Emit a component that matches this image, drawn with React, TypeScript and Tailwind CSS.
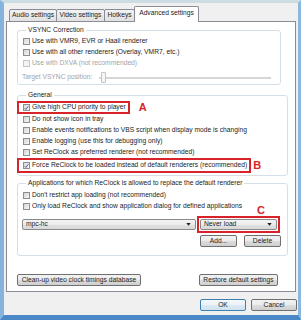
import type { ReactNode } from "react";

type CheckProps = {
  label: string;
  checked?: boolean;
  disabled?: boolean;
};

const Box = ({ checked, disabled }: { checked?: boolean; disabled?: boolean }) => (
  <span
    className={
      disabled
        ? "flex h-[7px] w-[7px] shrink-0 items-center justify-center border border-[#c6c6c6] bg-[#f4f4f4]"
        : "flex h-[7px] w-[7px] shrink-0 items-center justify-center border border-[#8e8f8f] bg-[linear-gradient(135deg,#d3d6da,#f6f6f6)]"
    }
  >
    {checked && (
      <svg viewBox="0 0 8 8" className="h-[6px] w-[6px]">
        <path d="M1 4.2 L3 6.3 L7 1.2" fill="none" stroke="#3d4f86" strokeWidth="1.4" />
      </svg>
    )}
  </span>
);

const Check = ({ label, checked, disabled }: CheckProps) => (
  <div className="flex h-[11px] items-center gap-[2px]">
    <Box checked={checked} disabled={disabled} />
    <span className={disabled ? "text-[#a3a3a3]" : "text-[#1c1c1c]"}>{label}</span>
  </div>
);

// red annotation frame round a row, drawn with outline so it takes no room
const Marked = ({ children, pr }: { children: ReactNode; pr: string }) => (
  <div
    className={`ml-[-5px] w-fit pl-[5px] ${pr} outline-2 outline-offset-[-1px] outline-[#d8232a]`}
  >
    {children}
  </div>
);

const Mark = ({ letter }: { letter: string }) => (
  <span className="text-[11px] font-bold leading-none text-[#d8232a]">{letter}</span>
);

const Btn = ({ label, className = "" }: { label: string; className?: string }) => (
  <button
    className={`flex h-[12px] items-center justify-center rounded-[2px] border border-[#707070] bg-[linear-gradient(#f2f2f2_0%,#ebebeb_50%,#dddddd_51%,#cfcfcf_100%)] text-[#1c1c1c] ${className}`}
  >
    {label}
  </button>
);

const Combo = ({ value, className = "" }: { value: string; className?: string }) => (
  <div
    className={`flex h-[11px] items-center justify-between rounded-[2px] border border-[#8a8a8a] bg-[linear-gradient(#f4f4f4_0%,#ececec_50%,#e1e1e1_51%,#d8d8d8_100%)] pl-[3px] pr-[4px] text-[#1c1c1c] ${className}`}
  >
    <span>{value}</span>
    <svg viewBox="0 0 6 4" className="h-[3px] w-[5px]">
      <path d="M0 0 H6 L3 3.5 Z" fill="#222" />
    </svg>
  </div>
);

const Tab = ({ label, active, w }: { label: string; active?: boolean; w: string }) => (
  <div
    className={
      active
        ? `flex h-[16px] ${w} items-start justify-center rounded-t-[2px] border border-b-0 border-[#898c95] bg-white pt-[3px] text-[#1c1c1c]`
        : `flex h-[13px] ${w} items-start justify-center rounded-t-[2px] border border-[#898c95] bg-[linear-gradient(#f2f2f2,#e1e1e1)] pt-[2px] text-[#1c1c1c]`
    }
  >
    {label}
  </div>
);

export default function App() {
  return (
    <div className="flex h-[320px] w-[301px] border-b-[5px] border-l-[4px] border-r-[3px] border-t-[3px] border-b-[#4a88c7] border-l-[#86b3dd] border-r-[#8db8de] border-t-[#cbdce3] font-['Liberation_Sans',Arial,sans-serif] text-[6.7px] leading-none">
      <div className="flex flex-1 flex-col bg-[#f0f0f0]">
        {/* tabs */}
        <div className="relative z-10 mb-[-1px] ml-[5px] mt-[3px] flex items-end">
          <Tab label="Audio settings" w="w-[48px]" />
          <div className="-ml-px" />
          <Tab label="Video settings" w="w-[49px]" />
          <div className="-ml-px" />
          <Tab label="Hotkeys" w="w-[31px]" />
          <div className="-ml-px" />
          <Tab label="Advanced settings" active w="w-[65px]" />
        </div>

        {/* tab page */}
        <div className="ml-[2px] flex h-[271px] w-[290px] flex-col border border-[#898c95] bg-white pl-[10px] pt-[4px]">
          <fieldset className="w-[264px] rounded-[3px] border border-[#d5dfe5] pb-[1px] pl-[5px]">
            <legend className="ml-[3px] px-[2px] leading-[8px] text-[#1c1c1c]">VSYNC Correction</legend>
            <div className="pt-[2px]">
              <Check label="Use with VMR9, EVR or Haali renderer" />
              <Check label="Use with all other renderers (Overlay, VMR7, etc.)" />
              <Check label="Use with DXVA (not recommended)" disabled />
              <div className="ml-[-1px] mt-[3px] flex h-[11px] items-center">
                <span className="w-[80px] text-[#a3a3a3]">Target VSYNC position:</span>
                <div className="relative ml-[-3px] h-[11px] flex-1">
                  <div className="mt-[5px] h-[2px] w-[172px] border border-[#d6d6d6] bg-[#f4f4f4]" />
                  <div className="absolute left-[2px] top-0 h-[11px] w-[5px] rounded-[1px] border border-[#c4c4c4] bg-[#f6f6f6]" />
                </div>
              </div>
            </div>
          </fieldset>

          <fieldset className="mt-[6px] w-[271px] rounded-[3px] border border-[#d5dfe5] pb-[3px] pl-[5px]">
            <legend className="ml-[3px] px-[2px] leading-[8px] text-[#1c1c1c]">General</legend>
            <div className="pt-[3px]">
              <div className="flex items-center gap-[10px]">
                <Marked pr="pr-[3px]">
                  <Check label="Give high CPU priority to player" checked />
                </Marked>
                <Mark letter="A" />
              </div>
              <div className="mt-[1px]">
                <Check label="Do not show icon in tray" />
              </div>
              <Check label="Enable events notifications to VBS script when display mode is changing" />
              <Check label="Enable logging (use this for debugging only)" />
              <Check label="Set ReClock as preferred renderer (not recommended)" />
              <div className="mt-[1px] flex items-center gap-[3px]">
                <Marked pr="pr-[3px]">
                  <div className="py-[1px]">
                    <Check label="Force ReClock to be loaded instead of default renderers (recommended)" checked />
                  </div>
                </Marked>
                <Mark letter="B" />
              </div>
            </div>
          </fieldset>

          <fieldset className="mt-[3px] w-[271px] rounded-[3px] border border-[#d5dfe5] pb-[8px] pl-[5px]">
            <legend className="ml-[3px] px-[2px] leading-[8px] text-[#1c1c1c]">
              Applications for which ReClock is allowed to replace the default renderer
            </legend>
            <div className="pt-[3px]">
              <Check label="Don't restrict app loading (not recommended)" />
              <div className="flex items-end">
                <Check label="Only load ReClock and show application dialog for defined applications" />
                <span className="mb-[-4px] ml-[15px]">
                  <Mark letter="C" />
                </span>
              </div>
              <div className="ml-[-1px] mt-[7px] flex items-center gap-[4px]">
                <Combo value="mpc-hc" className="w-[174px]" />
                <div className="outline-2 outline-offset-[1px] outline-[#d8232a]">
                  <Combo value="Never load" className="w-[77px]" />
                </div>
              </div>
              <div className="ml-[177px] mt-[5px] flex gap-[7px]">
                <Btn label="Add..." className="w-[37px]" />
                <Btn label="Delete" className="w-[37px]" />
              </div>
            </div>
          </fieldset>

          <div className="mt-[18px] flex">
            <Btn label="Clean-up video clock timings database" className="w-[124px]" />
            <Btn label="Restore default settings" className="ml-[58px] w-[79px]" />
          </div>
        </div>

        {/* dialog buttons */}
        <div className="ml-[196px] mt-[7px] flex gap-[5px]">
          <button className="flex h-[12px] w-[46px] items-center justify-center rounded-[2px] border border-[#3c7fb1] bg-[linear-gradient(#f4f9fc_0%,#e9f2f8_50%,#dbe9f3_51%,#d0e3f1_100%)] text-[#1c1c1c]">
            OK
          </button>
          <Btn label="Cancel" className="w-[46px]" />
        </div>
      </div>
    </div>
  );
}
